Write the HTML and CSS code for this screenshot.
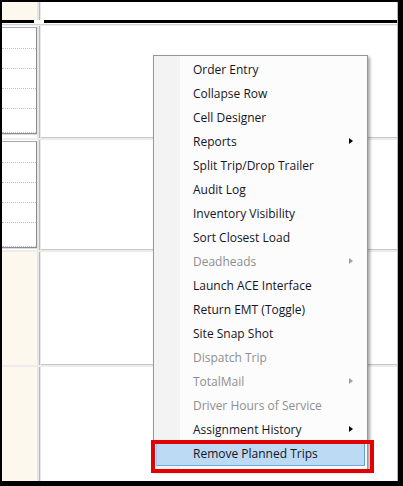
FILE: index.html
```html
<!DOCTYPE html>
<html lang="en">
<head>
<meta charset="UTF-8" />
<title>Planner grid - context menu</title>
<link rel="stylesheet" href="styles.css">
</head>
<body>

<div class="screen">
  <!-- header row -->
  <div class="row head">
    <div class="cell left cream"></div>
    <div class="vsep"></div>
    <div class="cell right"></div>
  </div>
  <div class="row bar">
    <div class="bar-left"></div>
    <div class="bar-gap"></div>
    <div class="bar-right"></div>
  </div>
  <div class="row hline"></div>

  <!-- grid rows -->
  <div class="row grid r1">
    <div class="cell left">
      <div class="panel">
        <div class="line"></div><div class="line"></div><div class="line"></div><div class="line"></div><div class="line last"></div>
      </div>
    </div>
    <div class="vsep"></div>
    <div class="cell right"></div>
  </div>
  <div class="row grid r2">
    <div class="cell left">
      <div class="panel">
        <div class="line"></div><div class="line"></div><div class="line"></div><div class="line"></div><div class="line last"></div>
      </div>
    </div>
    <div class="vsep"></div>
    <div class="cell right"></div>
  </div>
  <div class="row grid r3">
    <div class="cell left cream"></div>
    <div class="vsep"></div>
    <div class="cell right"></div>
  </div>
  <div class="row grid r4">
    <div class="cell left cream"></div>
    <div class="vsep"></div>
    <div class="cell right"></div>
  </div>

  <!-- context menu -->
  <div class="menu" role="menu">
    <div class="item">Order Entry</div>
    <div class="item">Collapse Row</div>
    <div class="item">Cell Designer</div>
    <div class="item sub">Reports</div>
    <div class="item">Split Trip/Drop Trailer</div>
    <div class="item">Audit Log</div>
    <div class="item">Inventory Visibility</div>
    <div class="item">Sort Closest Load</div>
    <div class="item sub off">Deadheads</div>
    <div class="item">Launch ACE Interface</div>
    <div class="item">Return EMT (Toggle)</div>
    <div class="item">Site Snap Shot</div>
    <div class="item off">Dispatch Trip</div>
    <div class="item sub off">TotalMail</div>
    <div class="item off">Driver Hours of Service</div>
    <div class="item sub">Assignment History</div>
    <div class="item hot">Remove Planned Trips</div>
    <div class="callout"></div>
  </div>
</div>

</body>
</html>
```

FILE: styles.css
```css
* {
  margin: 0; padding: 0; box-sizing: border-box;
}
html, body {
  width: 403px;
  height: 486px;
  overflow: hidden;
  background: #000;
  font-family: "Open Sans", "Noto Sans", sans-serif;
}
.screen {
  position: relative;
  margin: 2px 5px 0 2px;
  width: 396px;
  height: 479px;
  background: #fff;
  border-right: 1px solid #b8b8b8;
  display: flex;
  flex-direction: column;
}
.row {
  display: flex;
  flex-shrink: 0;
}
.cell.left {
  width: 35px;
  background: #fff;
}
.cell.right {
  flex: 1;
  background: #fff;
}
.cream {
  background: #fdf8ee !important;
}
.vsep {
  width: 4px;
  background: linear-gradient(to right, #e6e6e6 0 2px, #b9b9b9 2px 3px, #e8e8e8 3px);
}

.head { height: 18px; }
.bar { height: 3px; }
.bar-left { width: 32px; background: #000; }
.bar-gap { width: 10px; background: #fff; }
.bar-right { flex: 1; background: #000; }
.hline {
  height: 3px;
  background: linear-gradient(#fff 0 1px, #d4d4d4 1px 2px, #f0f0f0 2px);
}

.grid .cell.right { border-bottom: 1px solid #c6c6c6; }
.grid { border-bottom: 2px solid #ececec; }
.r1 { height: 114px; }
.r2 { height: 112px; }
.r3 { height: 115px; }
.r4 { flex: 1; border-bottom: 0; }
.r4 .cell.right { border-bottom: 0; }

.panel {
  margin-top: 1px;
  height: 107px;
  border: 1px solid #8e8e8e;
  border-left: 0;
  border-top-color: #a8a8a8;
  box-shadow: 0 1px 0 #dcdcdc;
  display: flex;
  flex-direction: column;
}
.line {
  height: 20px;
  border-bottom: 1px dotted #c2c2c2;
}
.line:first-child { height: 21px; }
.line.last { height: 24px; }

/* context menu */
.menu {
  position: absolute;
  left: 151px;
  top: 53px;
  width: 215px;
  padding: 2px 2px 3px;
  border: 1px solid #979797;
  background: linear-gradient(to right, #f3f3f3 0 26px, #fcfcfc 26px);
  box-shadow: 2px 2px 3px rgba(0, 0, 0, 0.35);
}
.item {
  position: relative;
  height: 24px;
  line-height: 23px;
  padding-left: 37px;
  font-size: 12px;
  color: #15151f;
  white-space: nowrap;
}
.item.off { color: #8f8f8f; }
.item.sub::after {
  content: "";
  position: absolute;
  right: 12px;
  top: 8px;
  border-left: 4px solid #000;
  border-top: 3.5px solid transparent;
  border-bottom: 3.5px solid transparent;
}
.item.off.sub::after { border-left-color: #a0a0a0; }
.item.hot {
  background: #bcdaf3;
  border: 1px solid #9ac6ee;
  border-bottom-color: #6fa9e0;
  border-right-color: #5b9ddc;
  padding-left: 36px;
  line-height: 21px;
}
.callout {
  position: absolute;
  left: -3px;
  top: 384px;
  width: 223px;
  height: 33px;
  border: 4px solid #e30000;
}
```
